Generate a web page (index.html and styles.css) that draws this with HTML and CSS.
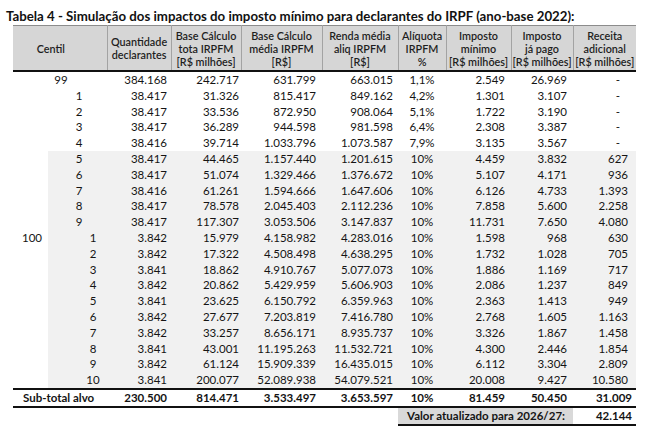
FILE: index.html
```html
<!DOCTYPE html>
<html lang="pt-BR">
<head>
<meta charset="utf-8">
<title>Tabela 4</title>
<link rel="stylesheet" href="styles.css">
</head>
<body>
<div class="page">
  <h1 class="title">Tabela 4 - Simulação dos impactos do imposto mínimo para declarantes do IRPF (ano-base 2022):</h1>
  <table class="tbl">
    <colgroup>
      <col class="w-a"><col class="w-b"><col class="w-q"><col class="w-bt"><col class="w-bm"><col class="w-rm"><col class="w-al"><col class="w-im"><col class="w-ip"><col class="w-ra">
    </colgroup>
    <thead>
      <tr>
        <th colspan="2" class="h-centil">Centil</th>
        <th>Quantidade<br>declarantes</th>
        <th>Base Cálculo<br>tota IRPFM<br>[R$ milhões]</th>
        <th>Base Cálculo<br>média IRPFM<br>[R$]</th>
        <th>Renda média<br>aliq IRPFM<br>[R$]</th>
        <th>Alíquota<br>IRPFM<br>%</th>
        <th>Imposto<br>mínimo<br>[R$ milhões]</th>
        <th>Imposto<br>já pago<br>[R$ milhões]</th>
        <th>Receita<br>adicional<br>[R$ milhões]</th>
      </tr>
    </thead>
    <tbody>
      <tr><td class="ca"></td><td class="cb c99">99</td><td class="q">384.168</td><td class="bt">242.717</td><td class="bm">631.799</td><td class="rm">663.015</td><td class="al">1,1%</td><td class="im">2.549</td><td class="ip">26.969</td><td class="ra dash">-</td></tr>
      <tr><td class="ca"></td><td class="cb s99">1</td><td class="q">38.417</td><td class="bt">31.326</td><td class="bm">815.417</td><td class="rm">849.162</td><td class="al">4,2%</td><td class="im">1.301</td><td class="ip">3.107</td><td class="ra dash">-</td></tr>
      <tr><td class="ca"></td><td class="cb s99">2</td><td class="q">38.417</td><td class="bt">33.536</td><td class="bm">872.950</td><td class="rm">908.064</td><td class="al">5,1%</td><td class="im">1.722</td><td class="ip">3.190</td><td class="ra dash">-</td></tr>
      <tr><td class="ca"></td><td class="cb s99">3</td><td class="q">38.417</td><td class="bt">36.289</td><td class="bm">944.598</td><td class="rm">981.598</td><td class="al">6,4%</td><td class="im">2.308</td><td class="ip">3.387</td><td class="ra dash">-</td></tr>
      <tr><td class="ca"></td><td class="cb s99">4</td><td class="q">38.416</td><td class="bt">39.714</td><td class="bm">1.033.796</td><td class="rm">1.073.587</td><td class="al">7,9%</td><td class="im">3.135</td><td class="ip">3.567</td><td class="ra dash">-</td></tr>
      <tr class="sh"><td class="ca"></td><td class="cb s99">5</td><td class="q">38.417</td><td class="bt">44.465</td><td class="bm">1.157.440</td><td class="rm">1.201.615</td><td class="al">10%</td><td class="im">4.459</td><td class="ip">3.832</td><td class="ra">627</td></tr>
      <tr class="sh"><td class="ca"></td><td class="cb s99">6</td><td class="q">38.417</td><td class="bt">51.074</td><td class="bm">1.329.466</td><td class="rm">1.376.672</td><td class="al">10%</td><td class="im">5.107</td><td class="ip">4.171</td><td class="ra">936</td></tr>
      <tr class="sh"><td class="ca"></td><td class="cb s99">7</td><td class="q">38.416</td><td class="bt">61.261</td><td class="bm">1.594.666</td><td class="rm">1.647.606</td><td class="al">10%</td><td class="im">6.126</td><td class="ip">4.733</td><td class="ra">1.393</td></tr>
      <tr class="sh"><td class="ca"></td><td class="cb s99">8</td><td class="q">38.417</td><td class="bt">78.578</td><td class="bm">2.045.403</td><td class="rm">2.112.236</td><td class="al">10%</td><td class="im">7.858</td><td class="ip">5.600</td><td class="ra">2.258</td></tr>
      <tr class="sh"><td class="ca"></td><td class="cb s99">9</td><td class="q">38.417</td><td class="bt">117.307</td><td class="bm">3.053.506</td><td class="rm">3.147.837</td><td class="al">10%</td><td class="im">11.731</td><td class="ip">7.650</td><td class="ra">4.080</td></tr>
      <tr class="sh"><td class="ca c100">100</td><td class="cb s100">1</td><td class="q">3.842</td><td class="bt">15.979</td><td class="bm">4.158.982</td><td class="rm">4.283.016</td><td class="al">10%</td><td class="im">1.598</td><td class="ip">968</td><td class="ra">630</td></tr>
      <tr class="sh"><td class="ca"></td><td class="cb s100">2</td><td class="q">3.842</td><td class="bt">17.322</td><td class="bm">4.508.498</td><td class="rm">4.638.295</td><td class="al">10%</td><td class="im">1.732</td><td class="ip">1.028</td><td class="ra">705</td></tr>
      <tr class="sh"><td class="ca"></td><td class="cb s100">3</td><td class="q">3.841</td><td class="bt">18.862</td><td class="bm">4.910.767</td><td class="rm">5.077.073</td><td class="al">10%</td><td class="im">1.886</td><td class="ip">1.169</td><td class="ra">717</td></tr>
      <tr class="sh"><td class="ca"></td><td class="cb s100">4</td><td class="q">3.842</td><td class="bt">20.862</td><td class="bm">5.429.959</td><td class="rm">5.606.903</td><td class="al">10%</td><td class="im">2.086</td><td class="ip">1.237</td><td class="ra">849</td></tr>
      <tr class="sh"><td class="ca"></td><td class="cb s100">5</td><td class="q">3.841</td><td class="bt">23.625</td><td class="bm">6.150.792</td><td class="rm">6.359.963</td><td class="al">10%</td><td class="im">2.363</td><td class="ip">1.413</td><td class="ra">949</td></tr>
      <tr class="sh"><td class="ca"></td><td class="cb s100">6</td><td class="q">3.842</td><td class="bt">27.677</td><td class="bm">7.203.819</td><td class="rm">7.416.780</td><td class="al">10%</td><td class="im">2.768</td><td class="ip">1.605</td><td class="ra">1.163</td></tr>
      <tr class="sh"><td class="ca"></td><td class="cb s100">7</td><td class="q">3.842</td><td class="bt">33.257</td><td class="bm">8.656.171</td><td class="rm">8.935.737</td><td class="al">10%</td><td class="im">3.326</td><td class="ip">1.867</td><td class="ra">1.458</td></tr>
      <tr class="sh"><td class="ca"></td><td class="cb s100">8</td><td class="q">3.841</td><td class="bt">43.001</td><td class="bm">11.195.263</td><td class="rm">11.532.721</td><td class="al">10%</td><td class="im">4.300</td><td class="ip">2.446</td><td class="ra">1.854</td></tr>
      <tr class="sh"><td class="ca"></td><td class="cb s100">9</td><td class="q">3.842</td><td class="bt">61.124</td><td class="bm">15.909.339</td><td class="rm">16.435.015</td><td class="al">10%</td><td class="im">6.112</td><td class="ip">3.304</td><td class="ra">2.809</td></tr>
      <tr class="sh"><td class="ca"></td><td class="cb s100">10</td><td class="q">3.841</td><td class="bt">200.077</td><td class="bm">52.089.938</td><td class="rm">54.079.521</td><td class="al">10%</td><td class="im">20.008</td><td class="ip">9.427</td><td class="ra">10.580</td></tr>
      <tr class="total"><td colspan="2" class="t-label">Sub-total alvo</td><td class="q">230.500</td><td class="bt">814.471</td><td class="bm">3.533.497</td><td class="rm">3.653.597</td><td class="al">10%</td><td class="im">81.459</td><td class="ip">50.450</td><td class="ra">31.009</td></tr>
      <tr class="upd"><td colspan="6" class="blank"></td><td colspan="3" class="u-label">Valor atualizado para 2026/27:</td><td class="ra u-val">42.144</td></tr>
    </tbody>
  </table>
</div>
</body>
</html>
```

FILE: styles.css
```css
html, body {
  margin: 0;
  padding: 0;
  background: #ffffff;
}

.page {
  padding: 8px 0 0 0;
  font-family: Lato, "Open Sans", "DejaVu Sans", sans-serif;
  color: #141414;
}

.title {
  margin: 0 0 1px 6px;
  font-size: 13.25px;
  line-height: 16px;
  font-weight: 700;
  color: #111;
  white-space: nowrap;
}

.tbl {
  margin-left: 13px;
  border-collapse: collapse;
  table-layout: fixed;
  width: 623px;
  font-size: 11.5px;
}

.w-a { width: 35px; }
.w-b { width: 59px; }
.w-q { width: 64px; }
.w-bt { width: 70px; }
.w-bm { width: 81px; }
.w-rm { width: 76px; }
.w-al { width: 48px; }
.w-im { width: 65px; }
.w-ip { width: 62px; }
.w-ra { width: 63px; }

.tbl th {
  background: #d6d6d6;
  height: 44px;
  padding: 0;
  font-size: 10.8px;
  line-height: 13px;
  font-weight: 600;
  color: #1e1e1e;
  text-align: center;
  vertical-align: middle;
  border-top: 1px solid #8c8c8c;
  border-bottom: 2px solid #111;
  border-left: 1px solid #a3a3a3;
  border-right: 1px solid #a3a3a3;
}

.tbl th:first-child { border-left: none; }
.tbl th:last-child { border-right: none; }

.tbl th.h-centil { padding-right: 18px; }

.tbl td {
  height: 15.8px;
  line-height: 15.8px;
  padding: 0;
  white-space: nowrap;
  text-align: right;
}

.tbl tr.sh td:not(.ca) { background: #f1f1f1; }

.tbl td.ca { text-align: left; }
.tbl td.c100 { padding-left: 9px; }
.tbl td.cb { text-align: center; }
.tbl td.c99 { padding-right: 33px; }
.tbl td.s99 { padding-left: 3px; }
.tbl td.s100 { padding-left: 31px; }

.tbl td.q { padding-right: 4px; }
.tbl td.bt { padding-right: 2px; }
.tbl td.bm { padding-right: 6px; }
.tbl td.rm { padding-right: 5px; }
.tbl td.al { text-align: center; }
.tbl td.im { padding-right: 6px; }
.tbl td.ip { padding-right: 6px; }
.tbl td.ra { padding-right: 8px; }
.tbl td.dash { padding-right: 16px; }

.tbl tr.total td {
  font-weight: 700;
  border-top: 2px solid #111;
  border-bottom: 2px solid #111;
}

.tbl tr.total td.t-label {
  text-align: left;
  padding-left: 10px;
}

.tbl tr.total td.ra,
.tbl tr.upd td.ra { padding-right: 4px; }

.tbl tr.upd td { font-weight: 700; }

.tbl tr.upd td.u-label {
  background: #d9d9d9;
  text-align: left;
  padding-left: 9px;
  border-bottom: 2px solid #111;
}

.tbl tr.upd td.u-val { border-bottom: 2px solid #111; }
```
